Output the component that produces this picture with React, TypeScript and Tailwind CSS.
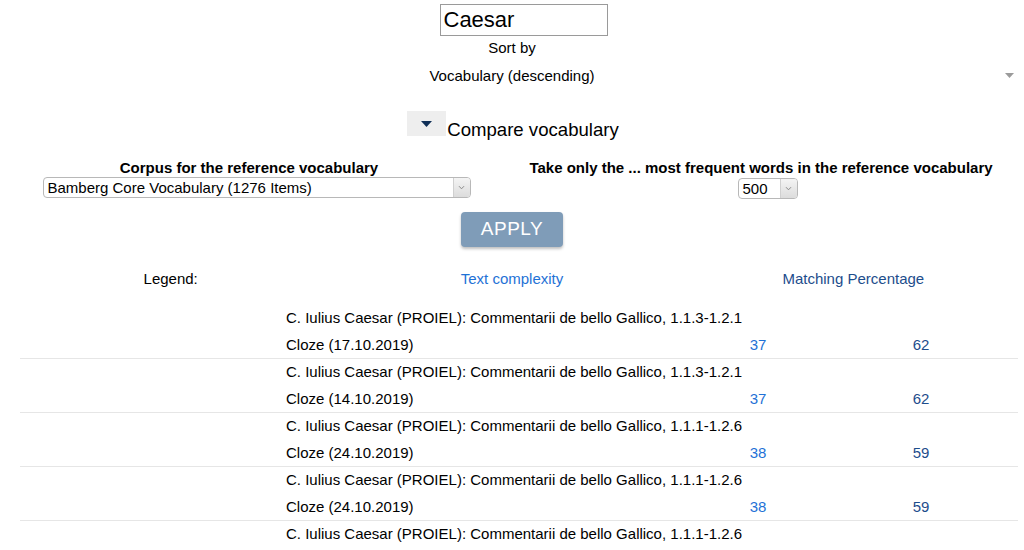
import React from "react";

const rows = [
  { title: "C. Iulius Caesar (PROIEL): Commentarii de bello Gallico, 1.1.3-1.2.1", kind: "Cloze (17.10.2019)", complexity: 37, match: 62 },
  { title: "C. Iulius Caesar (PROIEL): Commentarii de bello Gallico, 1.1.3-1.2.1", kind: "Cloze (14.10.2019)", complexity: 37, match: 62 },
  { title: "C. Iulius Caesar (PROIEL): Commentarii de bello Gallico, 1.1.1-1.2.6", kind: "Cloze (24.10.2019)", complexity: 38, match: 59 },
  { title: "C. Iulius Caesar (PROIEL): Commentarii de bello Gallico, 1.1.1-1.2.6", kind: "Cloze (24.10.2019)", complexity: 38, match: 59 },
  { title: "C. Iulius Caesar (PROIEL): Commentarii de bello Gallico, 1.1.1-1.2.6", kind: "Cloze (24.10.2019)", complexity: 38, match: 59 },
];

function NativeSelect({ value, className }: { value: string; className: string }) {
  return (
    <div className={`flex h-[21px] items-stretch rounded-[4px] border border-[#b8b8b8] bg-white ${className}`}>
      <span className="flex-1 pl-[4px] text-[15px] leading-[19px] text-black">{value}</span>
      <span className="flex w-[17px] items-center justify-center rounded-r-[3px] border-l border-[#d0d0d0] bg-gradient-to-b from-[#f4f4f4] to-[#dcdcdc]">
        <svg width="7" height="5" viewBox="0 0 7 5">
          <path d="M1 1.2 L3.5 3.8 L6 1.2" fill="none" stroke="#8a8a8a" strokeWidth="1" />
        </svg>
      </span>
    </div>
  );
}

export default function App() {
  return (
    <div className="min-h-screen w-full overflow-hidden bg-white font-['Liberation_Sans',Arial,sans-serif] text-black">
      {/* Search */}
      <div className="flex justify-center pt-[4px]">
        <div className="ml-[23px] h-[32px] w-[168px] border border-[#9a9a9a] pl-[3px] text-[22px] leading-[30px]">Caesar</div>
      </div>

      <div className="mt-[2px] text-center text-[15px] leading-[20px]">Sort by</div>

      {/* Sort select */}
      <div className="relative mt-[5px] flex h-[26px] items-center justify-center text-[15px]">
        <span>Vocabulary (descending)</span>
        <svg className="absolute right-[10px] top-[10px]" width="9" height="5" viewBox="0 0 9 5">
          <path d="M0 0 L9 0 L4.5 5 Z" fill="#9b9b9b" />
        </svg>
      </div>

      {/* Compare toggle */}
      <div className="mt-[22px] flex items-start justify-center pl-[2px]">
        <div className="flex h-[25px] w-[39px] items-center justify-center bg-[#eeeeee]">
          <svg width="11" height="6" viewBox="0 0 11 6">
            <path d="M0 0 L11 0 L5.5 6 Z" fill="#0f2f57" />
          </svg>
        </div>
        <span className="ml-[1px] mt-[8px] text-[18.6px] leading-[22px]">Compare vocabulary</span>
      </div>

      {/* Reference options */}
      <div className="mt-[18px] grid grid-cols-2">
        <div className="flex flex-col items-center">
          <div className="pr-[14px] text-[15px] font-bold leading-[17px]">Corpus for the reference vocabulary</div>
          <NativeSelect value="Bamberg Core Vocabulary (1276 Items)" className="mt-[1px] ml-[1px] w-[428px]" />
        </div>
        <div className="flex flex-col items-center">
          <div className="pr-[14px] text-[15px] font-bold leading-[17px] whitespace-nowrap">Take only the ... most frequent words in the reference vocabulary</div>
          <NativeSelect value="500" className="mt-[2px] ml-[-1px] w-[60px]" />
        </div>
      </div>

      <div className="mt-[13px] flex justify-center">
        <button className="h-[35px] w-[102px] rounded-[4px] bg-[#7f9cb8] text-[19px] tracking-[0.5px] text-white shadow-[0_2px_3px_rgba(0,0,0,0.25)]">
          APPLY
        </button>
      </div>

      {/* Legend */}
      <div className="mt-[22px] grid grid-cols-3 text-center text-[15px] leading-[20px]">
        <span>Legend:</span>
        <span className="text-[#1f72d6]">Text complexity</span>
        <span className="text-[#1d4d8c]">Matching Percentage</span>
      </div>

      {/* Results */}
      <div className="mx-[20px] mt-[16px] w-[998px]">
        {rows.map((r, i) => (
          <div key={i} className="grid grid-cols-[266px_426px_92px_20px_194px] border-b border-[#e6e6e6] text-[15px]">
            <div />
            <div className="whitespace-nowrap">
              <div className="leading-[26px]">{r.title}</div>
              <div className="leading-[27px]">{r.kind}</div>
            </div>
            <div className="flex items-end justify-center leading-[27px] text-[#1f72d6]">{r.complexity}</div>
            <div />
            <div className="flex items-end justify-center leading-[27px] text-[#1d4d8c]">{r.match}</div>
          </div>
        ))}
      </div>
    </div>
  );
}
